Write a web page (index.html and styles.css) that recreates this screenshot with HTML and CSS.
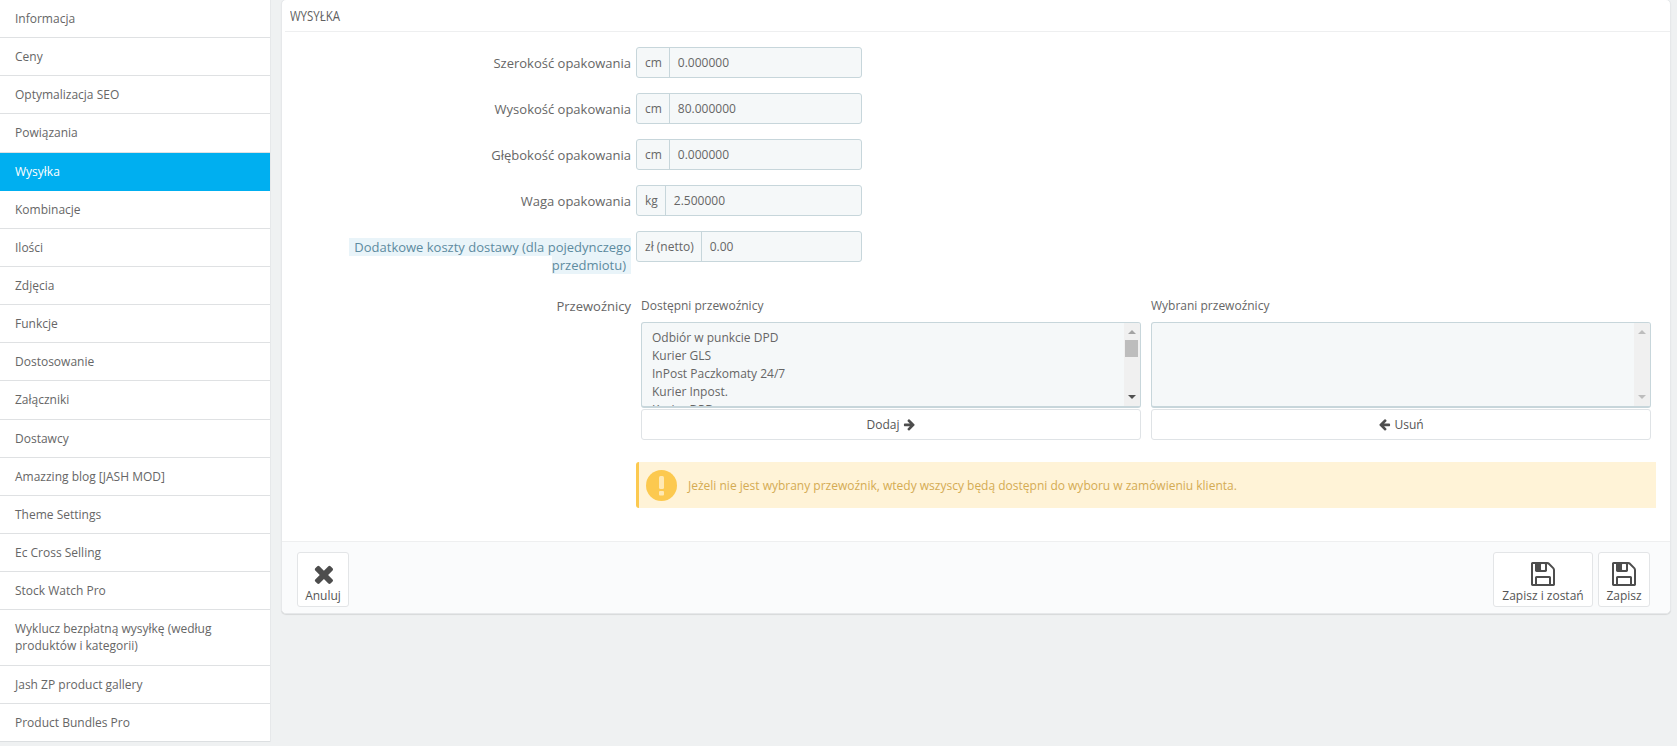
FILE: index.html
```html
<!DOCTYPE html>
<html lang="pl">
<head>
<meta charset="utf-8">
<title>Wysyłka</title>
<link rel="stylesheet" href="styles.css">
</head>
<body>
<div class="page">
  <nav class="side">
    <a class="item">Informacja</a>
    <a class="item">Ceny</a>
    <a class="item">Optymalizacja SEO</a>
    <a class="item">Powiązania</a>
    <a class="item active">Wysyłka</a>
    <a class="item">Kombinacje</a>
    <a class="item">Ilości</a>
    <a class="item">Zdjęcia</a>
    <a class="item">Funkcje</a>
    <a class="item">Dostosowanie</a>
    <a class="item">Załączniki</a>
    <a class="item">Dostawcy</a>
    <a class="item">Amazzing blog [JASH MOD]</a>
    <a class="item">Theme Settings</a>
    <a class="item">Ec Cross Selling</a>
    <a class="item">Stock Watch Pro</a>
    <a class="item">Wyklucz bezpłatną wysyłkę (według produktów i kategorii)</a>
    <a class="item">Jash ZP product gallery</a>
    <a class="item">Product Bundles Pro</a>
  </nav>
  <main class="panel">
    <h3 class="head"><span class="head-text">WYSYŁKA</span></h3>
    <div class="body">
      <div class="row">
        <label class="lbl">Szerokość opakowania</label>
        <div class="group"><span class="addon">cm</span><span class="val">0.000000</span></div>
      </div>
      <div class="row">
        <label class="lbl">Wysokość opakowania</label>
        <div class="group"><span class="addon">cm</span><span class="val">80.000000</span></div>
      </div>
      <div class="row">
        <label class="lbl">Głębokość opakowania</label>
        <div class="group"><span class="addon">cm</span><span class="val">0.000000</span></div>
      </div>
      <div class="row">
        <label class="lbl">Waga opakowania</label>
        <div class="group"><span class="addon">kg</span><span class="val">2.500000</span></div>
      </div>
      <div class="row">
        <label class="lbl lbl-two"><span class="hint">Dodatkowe koszty dostawy (dla pojedynczego przedmiotu)</span></label>
        <div class="group"><span class="addon">zł (netto)</span><span class="val">0.00</span></div>
      </div>
      <div class="row carriers">
        <label class="lbl">Przewoźnicy</label>
        <div class="swap">
          <div class="col">
            <div class="col-title">Dostępni przewoźnicy</div>
            <div class="box">
              <div class="opts">
                <div>Odbiór w punkcie DPD</div>
                <div>Kurier GLS</div>
                <div>InPost Paczkomaty 24/7</div>
                <div>Kurier Inpost.</div>
                <div>Kurier DPD</div>
              </div>
              <div class="sbar"><i class="up"></i><b class="thumb"></b><i class="down"></i></div>
            </div>
            <button class="btn">Dodaj <svg class="arrow" viewBox="0 0 1792 1792"><path d="M1600 960q0 54-37 91l-651 651q-39 37-91 37-51 0-90-37l-75-75q-38-38-38-91t38-91l293-293h-704q-52 0-84.5-37.5t-32.5-90.5v-128q0-53 32.5-90.5t84.5-37.5h704l-293-294q-38-36-38-90t38-90l75-75q38-38 90-38 53 0 91 38l651 651q37 35 37 90z"/></svg></button>
          </div>
          <div class="col">
            <div class="col-title">Wybrani przewoźnicy</div>
            <div class="box">
              <div class="opts"></div>
              <div class="sbar off"><i class="up"></i><i class="down"></i></div>
            </div>
            <button class="btn"><svg class="arrow" viewBox="0 0 1792 1792"><path d="M1664 896v128q0 53-32.5 90.5t-84.5 37.5h-704l293 294q38 36 38 90t-38 90l-75 75q-38 37-91 37t-90-37l-651-652q-37-37-37-90 0-52 37-91l651-650q38-38 90-38 52 0 90 38l75 74q38 38 38 91t-38 91l-293 293h704q52 0 84.5 37.5t32.5 90.5z"/></svg> Usuń</button>
          </div>
        </div>
      </div>
      <div class="alert">
        <span class="alert-ico"><svg viewBox="0 0 31 31"><rect x="13" y="6" width="5" height="13" rx="1.5"/><rect x="13" y="21" width="5" height="4.5" rx="1"/></svg></span>
        <span>Jeżeli nie jest wybrany przewoźnik, wtedy wszyscy będą dostępni do wyboru w zamówieniu klienta.</span>
      </div>
    </div>
    <footer class="foot">
      <button class="act">
        <svg class="ico ico-x" viewBox="182 246 1308 1308"><path d="M1490 1322q0 40-28 68l-136 136q-28 28-68 28t-68-28l-294-294-294 294q-28 28-68 28t-68-28l-136-136q-28-28-28-68t28-68l294-294-294-294q-28-28-28-68t28-68l136-136q28-28 68-28t68 28l294 294 294-294q28-28 68-28t68 28l136 136q28 28 28 68t-28 68l-294 294 294 294q28 28 28 68z"/></svg>
        <span>Anuluj</span>
      </button>
      <span class="spacer"></span>
      <button class="act wide">
        <svg class="ico" viewBox="0 0 1536 1536"><path d="M384 1408h768v-384h-768v384zm896 0h128v-896q0-14-10-38.5t-20-34.5l-281-281q-10-10-34-20t-39-10v416q0 40-28 68t-68 28h-576q-40 0-68-28t-28-68v-416h-128v1280h128v-416q0-40 28-68t68-28h832q40 0 68 28t28 68v416zm-384-928v-320q0-13-9.5-22.5t-22.5-9.5h-192q-13 0-22.5 9.5t-9.5 22.5v320q0 13 9.5 22.5t22.5 9.5h192q13 0 22.5-9.5t9.5-22.5zm640 32v928q0 40-28 68t-68 28h-1344q-40 0-68-28t-28-68v-1344q0-40 28-68t68-28h928q40 0 88 20t76 48l280 280q28 28 48 76t20 88z"/></svg>
        <span>Zapisz i zostań</span>
      </button>
      <button class="act">
        <svg class="ico" viewBox="0 0 1536 1536"><path d="M384 1408h768v-384h-768v384zm896 0h128v-896q0-14-10-38.5t-20-34.5l-281-281q-10-10-34-20t-39-10v416q0 40-28 68t-68 28h-576q-40 0-68-28t-28-68v-416h-128v1280h128v-416q0-40 28-68t68-28h832q40 0 68 28t28 68v416zm-384-928v-320q0-13-9.5-22.5t-22.5-9.5h-192q-13 0-22.5 9.5t-9.5 22.5v320q0 13 9.5 22.5t22.5 9.5h192q13 0 22.5-9.5t9.5-22.5zm640 32v928q0 40-28 68t-68 28h-1344q-40 0-68-28t-28-68v-1344q0-40 28-68t68-28h928q40 0 88 20t76 48l280 280q28 28 48 76t20 88z"/></svg>
        <span>Zapisz</span>
      </button>
    </footer>
  </main>
</div>
</body>
</html>
```
FILE: styles.css
```css
* { box-sizing: border-box; }
html, body { margin: 0; height: 100%; overflow: hidden; }
body {
  background: #eff1f2;
  color: #555;
  font-family: "Open Sans", "Liberation Sans", sans-serif;
  font-size: 12px;
}
.page { display: flex; align-items: flex-start; gap: 11px; }

.side {
  flex: 0 0 270px;
  background: #fff;
  border-bottom: 1px solid #dcdfe1;
  box-shadow: 1px 0 0 #e6e8ea;
}
.item {
  display: block;
  padding: 10px 15px;
  line-height: 17.14px;
  border-bottom: 1px solid #dfe1e3;
  color: #666;
}
.item:last-child { border-bottom: 0; }
.item.active { background: #00aff0; color: #fff; border-bottom-color: #00aff0; }
.item:nth-child(17) { padding-right: 40px; }

.panel {
  flex: 0 0 1390px;
  margin-top: -1px;
  background: #fff;
  border: 1px solid #e6e8ea;
  border-radius: 5px;
  box-shadow: 0 1px 1px rgba(0,0,0,.1);
}
.head {
  margin: 0 0 0 3px;
  height: 32px;
  padding: 7px 0 0 5px;
  border-bottom: 1px solid #eeeff0;
  font-weight: 400;
  font-size: 14px;
  line-height: 18px;
  color: #606060;
}
.head-text {
  display: inline-block;
  transform: scaleX(.82);
  transform-origin: left center;
}
.body { padding: 15px 14px 33px 0; }
.row { display: flex; align-items: flex-start; margin-bottom: 15px; }
.lbl {
  flex: 0 0 349px;
  padding-top: 7px;
  line-height: 18px;
  text-align: right;
  font-size: 13px;
  color: #666;
}
.lbl-two { padding-bottom: 1px; }
.hint {
  background: #e9f4f9;
  color: #5d8ba0;
  padding: 0 5px;
}
.group {
  display: flex;
  width: 226px;
  height: 31px;
  margin-left: 5px;
  background: #f5f8f9;
  border: 1px solid #c7d6db;
  border-radius: 3px;
  line-height: 29px;
  color: #666;
}
.addon { padding: 0 7px 0 8px; border-right: 1px solid #c7d6db; white-space: nowrap; }
.val { padding-left: 8px; }

.carriers { margin-bottom: 22px; }
.swap { flex: 1; display: flex; gap: 10px; padding-left: 10px; padding-right: 5px; }
.col { flex: 1; min-width: 0; }
.col-title { height: 32px; padding-top: 7px; line-height: 18px; color: #666; }
.box {
  display: flex;
  height: 86px;
  margin-bottom: 1px;
  background: #f5f8f9;
  border: 1px solid #c7d6db;
  border-bottom-width: 2px;
  border-radius: 3px;
  overflow: hidden;
}
.opts { flex: 1; padding: 6px 9px 6px 10px; line-height: 18px; font-size: 12px; color: #666; }
.sbar {
  position: relative;
  flex: 0 0 16px;
  background: #f0f0f0;
}
.sbar i {
  position: absolute;
  left: 4px;
  width: 0;
  height: 0;
  border-left: 4px solid transparent;
  border-right: 4px solid transparent;
}
.up { top: 7px; border-bottom: 4px solid #a3a3a3; }
.down { bottom: 7px; border-top: 4px solid #505050; }
.sbar.off .up { border-bottom-color: #bdbdbd; }
.sbar.off .down { border-top-color: #bdbdbd; }
.thumb {
  position: absolute;
  left: 1px;
  right: 2px;
  top: 17px;
  height: 17px;
  background: #bdbdbd;
}
.btn {
  display: block;
  width: 100%;
  height: 31px;
  padding: 0 0 1px;
  background: #fff;
  border: 1px solid #dfe3e6;
  border-radius: 3px;
  font: 12px "Open Sans", "Liberation Sans", sans-serif;
  color: #555;
}
.arrow { width: 13px; height: 13px; vertical-align: -2px; fill: #4d4d4d; }

.alert {
  display: flex;
  align-items: center;
  gap: 11px;
  height: 46px;
  margin-left: 354px;
  padding-left: 7px;
  background: #fff3d7;
  border-left: 3px solid #fcc94f;
  border-radius: 3px 0 0 3px;
  color: #d4ab53;
  font-size: 12px;
}
.alert-ico { width: 31px; height: 31px; flex: none; border-radius: 50%; background: #fcc94f; }
.alert-ico svg { display: block; fill: #ffe9b3; }

.foot {
  display: flex;
  gap: 5px;
  height: 72px;
  padding: 10px 20px 0 15px;
  background: #fafbfc;
  border-top: 1px solid #eeeff0;
  border-radius: 0 0 5px 5px;
}
.spacer { flex: 1; }
.act {
  display: flex;
  flex-direction: column;
  align-items: center;
  width: 52px;
  height: 55px;
  padding: 9px 0 0;
  background: #fff;
  border: 1px solid #e3e5e7;
  border-radius: 3px;
  font: 12px/17px "Open Sans", "Liberation Sans", sans-serif;
  color: #555;
  white-space: nowrap;
}
.act.wide { width: 100px; }
.ico { width: 24px; height: 24px; fill: #4d4d4d; flex: none; }
.ico-x { width: 20px; height: 20px; margin: 2px 0; }
.act span { margin-top: 1px; }
```
